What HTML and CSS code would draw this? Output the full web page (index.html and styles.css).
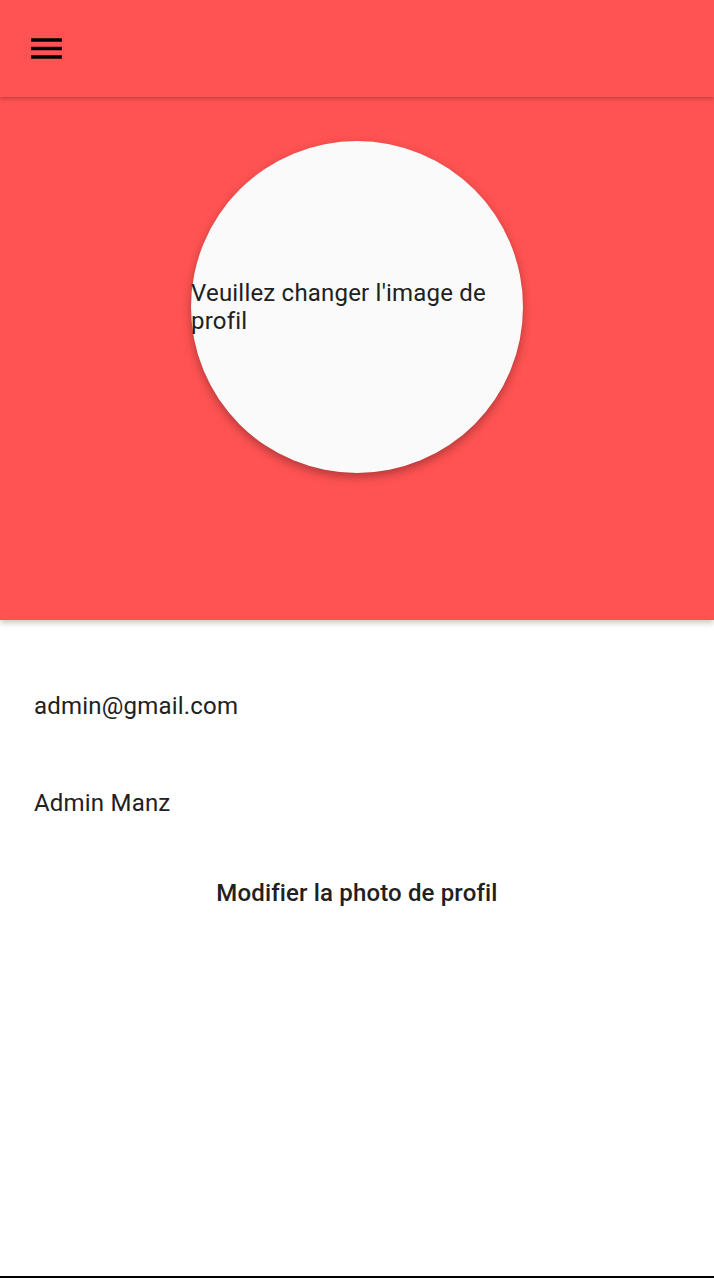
FILE: index.html
```html
<!DOCTYPE html>
<html lang="fr">
<head>
<meta charset="utf-8">
<title>Profil</title>
<link rel="stylesheet" href="styles.css">
</head>
<body>
<div class="page">
  <header class="appbar">
    <button class="menu-btn" aria-label="Menu">
      <svg viewBox="0 0 24 24" width="41" height="41"><path d="M3 18h18v-2H3v2zm0-5h18v-2H3v2zm0-7v2h18V6H3z" fill="#000"/></svg>
    </button>
  </header>
  <section class="hero">
    <div class="avatar">
      <p class="avatar-text">Veuillez changer l'image de profil</p>
    </div>
  </section>
  <main class="info">
    <div class="field">admin@gmail.com</div>
    <div class="field">Admin Manz</div>
    <button class="change-btn">Modifier la photo de profil</button>
  </main>
</div>
</body>
</html>
```
FILE: styles.css
```css
html, body {
  margin: 0;
  padding: 0;
  background: #fff;
}
body {
  font-family: Roboto, "Noto Sans", sans-serif;
  color: #212121;
}
.page {
  height: 1278px;
  box-sizing: border-box;
  display: flex;
  flex-direction: column;
  border-bottom: 2px solid #000;
  overflow: hidden;
}
.appbar {
  height: 97px;
  background: #ff5252;
  display: flex;
  align-items: center;
  padding-left: 26px;
  position: relative;
  z-index: 2;
  box-shadow: 0 2px 4px rgba(0,0,0,0.22);
  flex-shrink: 0;
}
.menu-btn {
  background: none;
  border: none;
  padding: 0;
  margin: 0;
  display: flex;
}
.hero {
  height: 523px;
  background: #ff5252;
  display: flex;
  justify-content: center;
  padding-top: 44px;
  box-sizing: border-box;
  position: relative;
  z-index: 1;
  box-shadow: 0 3px 6px rgba(0,0,0,0.22);
  flex-shrink: 0;
}
.avatar {
  width: 332px;
  height: 332px;
  border-radius: 50%;
  background: #fafafa;
  display: flex;
  align-items: center;
  box-shadow: 0 4px 10px rgba(0,0,0,0.3);
}
.avatar-text {
  margin: 0;
  font-size: 24px;
  line-height: 28px;
  letter-spacing: 0.2px;
  color: #212121;
}
.info {
  display: flex;
  flex-direction: column;
  padding-top: 72px;
}
.field {
  font-size: 24px;
  line-height: 28px;
  letter-spacing: 0.2px;
  padding-left: 34px;
  margin-bottom: 69px;
}
.change-btn {
  align-self: center;
  background: none;
  border: none;
  font-family: Roboto, "Noto Sans", sans-serif;
  font-size: 24px;
  font-weight: 500;
  letter-spacing: 0.15px;
  color: #212121;
  line-height: 28px;
  padding: 0;
  margin-top: -7px;
}
```
